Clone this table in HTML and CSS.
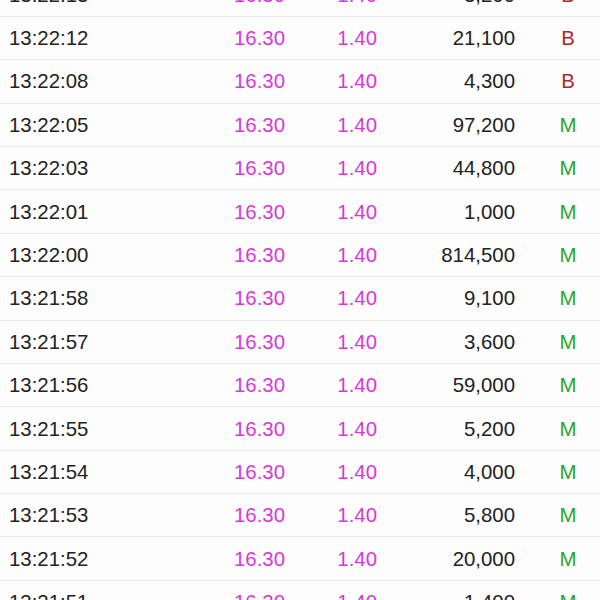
FILE: index.html
```html
<!DOCTYPE html>
<html>
<head>
<meta charset="utf-8">
<link rel="stylesheet" href="styles.css">
</head>
<body>
<div class="list">
  <div class="row"><span class="time">13:22:13</span><span class="price">16.30</span><span class="chg">1.40</span><span class="vol">3,200</span><span class="flag b">B</span></div>
  <div class="row"><span class="time">13:22:12</span><span class="price">16.30</span><span class="chg">1.40</span><span class="vol">21,100</span><span class="flag b">B</span></div>
  <div class="row"><span class="time">13:22:08</span><span class="price">16.30</span><span class="chg">1.40</span><span class="vol">4,300</span><span class="flag b">B</span></div>
  <div class="row"><span class="time">13:22:05</span><span class="price">16.30</span><span class="chg">1.40</span><span class="vol">97,200</span><span class="flag m">M</span></div>
  <div class="row"><span class="time">13:22:03</span><span class="price">16.30</span><span class="chg">1.40</span><span class="vol">44,800</span><span class="flag m">M</span></div>
  <div class="row"><span class="time">13:22:01</span><span class="price">16.30</span><span class="chg">1.40</span><span class="vol">1,000</span><span class="flag m">M</span></div>
  <div class="row"><span class="time">13:22:00</span><span class="price">16.30</span><span class="chg">1.40</span><span class="vol">814,500</span><span class="flag m">M</span></div>
  <div class="row"><span class="time">13:21:58</span><span class="price">16.30</span><span class="chg">1.40</span><span class="vol">9,100</span><span class="flag m">M</span></div>
  <div class="row"><span class="time">13:21:57</span><span class="price">16.30</span><span class="chg">1.40</span><span class="vol">3,600</span><span class="flag m">M</span></div>
  <div class="row"><span class="time">13:21:56</span><span class="price">16.30</span><span class="chg">1.40</span><span class="vol">59,000</span><span class="flag m">M</span></div>
  <div class="row"><span class="time">13:21:55</span><span class="price">16.30</span><span class="chg">1.40</span><span class="vol">5,200</span><span class="flag m">M</span></div>
  <div class="row"><span class="time">13:21:54</span><span class="price">16.30</span><span class="chg">1.40</span><span class="vol">4,000</span><span class="flag m">M</span></div>
  <div class="row"><span class="time">13:21:53</span><span class="price">16.30</span><span class="chg">1.40</span><span class="vol">5,800</span><span class="flag m">M</span></div>
  <div class="row"><span class="time">13:21:52</span><span class="price">16.30</span><span class="chg">1.40</span><span class="vol">20,000</span><span class="flag m">M</span></div>
  <div class="row"><span class="time">13:21:51</span><span class="price">16.30</span><span class="chg">1.40</span><span class="vol">1,400</span><span class="flag m">M</span></div>
</div>
</body>
</html>
```
FILE: styles.css
```css
html, body {
  margin: 0;
  padding: 0;
  background: #fdfdfd;
  overflow: hidden;
}
body {
  width: 600px;
  height: 600px;
  font-family: "Liberation Sans", Arial, sans-serif;
  font-size: 20.4px;
}
.list {
  margin-top: -26.6px;
}
.row {
  box-sizing: border-box;
  height: 43.4px;
  border-bottom: 1px solid #ebebeb;
  display: grid;
  grid-template-columns: 185px 91px 92px 138px 85px;
  padding-left: 9px;
  align-items: center;
  padding-top: 1px;
}
.time {
  color: #222;
  text-align: left;
}
.price, .chg {
  color: #d53ad5;
  text-align: right;
}
.vol {
  color: #222;
  text-align: right;
}
.flag {
  padding-left: 21px;
  text-align: center;
}
.flag.b {
  color: #b0262c;
}
.flag.m {
  color: #2ba52b;
}
```
